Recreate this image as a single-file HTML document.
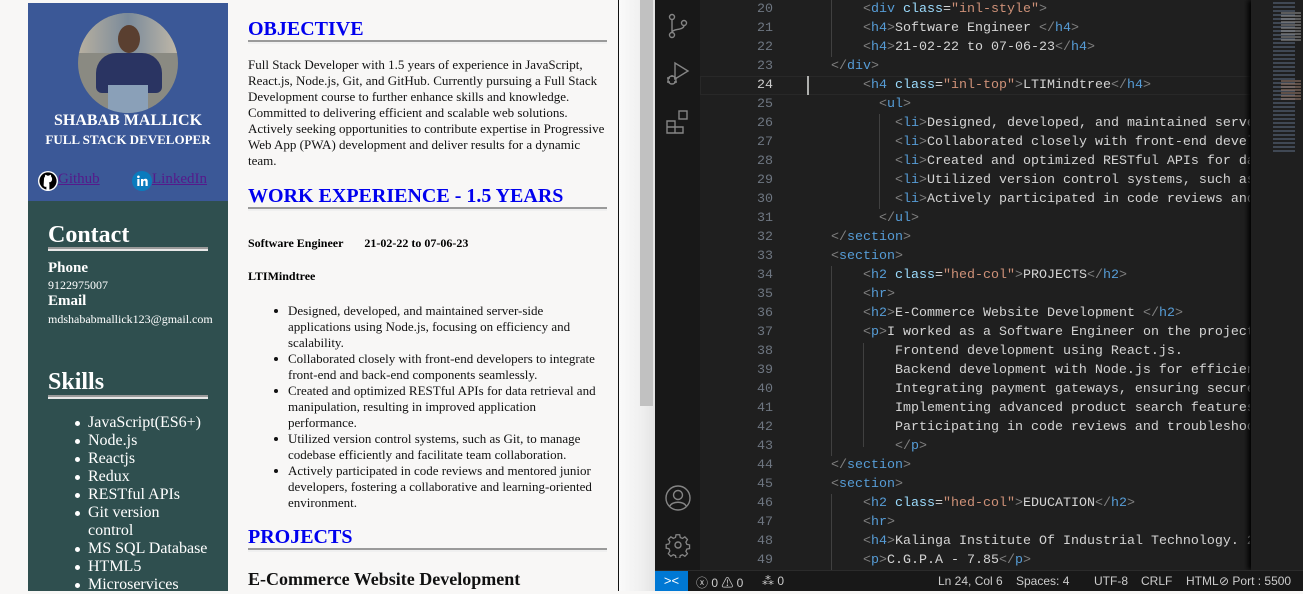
<!DOCTYPE html>
<html><head><meta charset="utf-8"><style>
*{margin:0;padding:0;box-sizing:border-box}
body{width:1303px;height:591px;overflow:hidden;background:#f8f7f6;position:relative;font-family:"Liberation Serif",serif}
.a{position:absolute;white-space:nowrap}
#side1{position:absolute;left:28px;top:3px;width:200px;height:198px;background:#3b5897}
#side2{position:absolute;left:28px;top:201px;width:200px;height:390px;background:#2f4f4f}
.w{color:#fff}
.hrl{position:absolute;height:4px;border-top:2px solid #9a9a9a;border-bottom:2px solid #e8e8e8;background:#c8c8c8}
.hrw{position:absolute;height:4px;border-top:2px solid #9a9a9a;border-bottom:2px solid #f0f0f0;background:#ddd}
h2.b{position:absolute;color:#0000ee;font-size:20px;font-weight:bold;white-space:nowrap;left:248px}
.p{position:absolute;left:248px;width:362px;font-size:13px;line-height:16px;color:#111}
ul.l{position:absolute;left:274px;width:334px;font-size:13px;line-height:16px;list-style:none;color:#111}
ul.l li{position:relative;padding-left:14px}
ul.l li:before{content:"";position:absolute;left:0;top:6px;width:4px;height:4px;border-radius:50%;background:#111}
ul.s{position:absolute;left:70px;top:414px;width:138px;font-size:16px;line-height:18px;list-style:none;color:#fff}
ul.s li{position:relative;padding-left:18px}
ul.s li:before{content:"";position:absolute;left:5px;top:7px;width:5px;height:5px;border-radius:50%;background:#fff}
#sb{position:absolute;left:618px;top:0;width:1px;height:591px;background:#111}
#sbt{position:absolute;left:619px;top:0;width:36px;height:591px;background:linear-gradient(90deg,#fafafa,#f0f0f0 60%,#e4e4e4)}
#th{position:absolute;left:640px;top:0;width:13px;height:406px;background:#c1c1c1}
#act{position:absolute;left:655px;top:0;width:45px;height:570px;background:#181818}
#ed{position:absolute;left:700px;top:0;width:603px;height:570px;background:#1f1f1f}
#status{position:absolute;left:655px;top:570px;width:648px;height:21px;background:#181818;border-top:1px solid #2b2b2b;color:#ccc;font-family:"Liberation Sans",sans-serif;font-size:12px}
#code{position:absolute;left:799px;top:0;width:451px;height:570px;overflow:hidden;font-family:"Liberation Mono",monospace;font-size:13.33px;line-height:19px;color:#d4d4d4;white-space:pre}
#nums{position:absolute;left:700px;top:0;width:73px;text-align:right;font-family:"Liberation Mono",monospace;font-size:13.33px;line-height:19px;color:#6e7681;white-space:pre}
.t{color:#808080}.n{color:#569cd6}.at{color:#9cdcfe}.st{color:#ce9178}
#mini{position:absolute;left:1251px;top:0;width:52px;height:570px;background:#1f1f1f;box-shadow:-3px 0 5px #000}
</style></head><body>
<div id="side1"></div><div id="side2"></div>
<div class="a" style="left:78px;top:13px;width:100px;height:100px;border-radius:50%;overflow:hidden;background:#8a8a82">
<div class="a" style="left:0;top:0;width:100px;height:40px;background:linear-gradient(90deg,#b8b0a0,#7a8a9a,#c0b8a8)"></div>
<div class="a" style="left:18px;top:40px;width:66px;height:40px;border-radius:20px 20px 6px 6px;background:#2a3462"></div>
<div class="a" style="left:40px;top:12px;width:22px;height:28px;border-radius:50%;background:#5a3f30"></div>
<div class="a" style="left:30px;top:72px;width:40px;height:30px;background:#8aa0b8"></div>
</div>
<div class="a w" style="left:28px;width:200px;text-align:center;top:112px;font-size:16px;font-weight:bold">SHABAB MALLICK</div>
<div class="a w" style="left:28px;width:200px;text-align:center;top:132px;font-size:13px;font-weight:bold">FULL STACK DEVELOPER</div>
<svg class="a" style="left:38px;top:171px" width="20" height="20" viewBox="0 0 20 20"><circle cx="10" cy="10" r="10" fill="#fff"/><circle cx="10" cy="10" r="8.6" fill="#000"/><path d="M6 8c0-1 .4-2 1-2.5 0-.8.1-1.5.3-1.8 1 .2 1.6.6 2 1 .5-.1 1-.1 1.5 0 .5-.4 1.2-.8 2-1 .2.3.3 1 .3 1.8.6.5 1 1.5 1 2.5 0 2.5-1.6 3.3-3.3 3.5.4.4.6 1 .6 1.7V19h-3v-3.2c-1.5.3-2.3-.3-2.8-1.3" fill="#fff"/></svg>
<div class="a" style="left:58px;top:171px;font-size:15px;color:#551a8b;text-decoration:underline">Github</div>
<svg class="a" style="left:132px;top:171px" width="20" height="20" viewBox="0 0 20 20"><circle cx="10" cy="10" r="10" fill="#0a7bbd"/><rect x="5.3" y="8" width="2.2" height="7" fill="#fff"/><circle cx="6.4" cy="5.8" r="1.3" fill="#fff"/><path d="M9 8h2.1v1c.5-.8 1.3-1.2 2.3-1.2 1.7 0 2.3 1 2.3 2.8V15h-2.2v-4c0-.9-.3-1.4-1-1.4-.8 0-1.3.5-1.3 1.5V15H9z" fill="#fff"/></svg>
<div class="a" style="left:152px;top:171px;font-size:15px;color:#551a8b;text-decoration:underline">LinkedIn</div>
<div class="a w" style="left:48px;top:222px;font-size:24px;font-weight:bold">Contact</div>
<div class="hrl" style="left:48px;top:247px;width:160px"></div>
<div class="a w" style="left:48px;top:260px;font-size:15px;font-weight:bold">Phone</div>
<div class="a w" style="left:48px;top:278px;font-size:12px">9122975007</div>
<div class="a w" style="left:48px;top:293px;font-size:15px;font-weight:bold">Email</div>
<div class="a w" style="left:48px;top:312px;font-size:12px">mdshababmallick123@gmail.com</div>
<div class="a w" style="left:48px;top:369px;font-size:24px;font-weight:bold">Skills</div>
<div class="hrl" style="left:48px;top:395px;width:160px"></div>
<ul class="s"><li>JavaScript(ES6+)</li><li>Node.js</li><li>Reactjs</li><li>Redux</li><li>RESTful APIs</li><li>Git version control</li><li>MS SQL Database</li><li>HTML5</li><li>Microservices</li></ul>

<h2 class="b" style="top:18px">OBJECTIVE</h2>
<div class="hrw" style="left:248px;top:40px;width:359px"></div>
<div class="p" style="top:57px">Full Stack Developer with 1.5 years of experience in JavaScript, React.js, Node.js, Git, and GitHub. Currently pursuing a Full Stack Development course to further enhance skills and knowledge. Committed to delivering efficient and scalable web solutions. Actively seeking opportunities to contribute expertise in Progressive Web App (PWA) development and deliver results for a dynamic team.</div>
<h2 class="b" style="top:185px">WORK EXPERIENCE - 1.5 YEARS</h2>
<div class="hrw" style="left:248px;top:207px;width:359px"></div>
<div class="a" style="left:248px;top:236px;font-size:12px;font-weight:bold">Software Engineer&nbsp;&nbsp;&nbsp;&nbsp;&nbsp;&nbsp; 21-02-22 to 07-06-23</div>
<div class="a" style="left:248px;top:269px;font-size:12px;font-weight:bold">LTIMindtree</div>
<ul class="l" style="top:303px"><li>Designed, developed, and maintained server-side applications using Node.js, focusing on efficiency and scalability.</li><li>Collaborated closely with front-end developers to integrate front-end and back-end components seamlessly.</li><li>Created and optimized RESTful APIs for data retrieval and manipulation, resulting in improved application performance.</li><li>Utilized version control systems, such as Git, to manage codebase efficiently and facilitate team collaboration.</li><li>Actively participated in code reviews and mentored junior developers, fostering a collaborative and learning-oriented environment.</li></ul>
<h2 class="b" style="top:526px">PROJECTS</h2>
<div class="hrw" style="left:248px;top:548px;width:359px"></div>
<div class="a" style="left:248px;top:569px;font-size:18px;font-weight:bold;color:#111">E-Commerce Website Development</div>

<div id="sbt"></div><div id="sb"></div><div id="th"></div>
<div id="act"></div>
<svg class="a" style="left:666px;top:13px" width="24" height="26" viewBox="0 0 24 26" fill="none" stroke="#858585" stroke-width="1.4"><circle cx="6" cy="4" r="2.5"/><circle cx="6" cy="22" r="2.5"/><circle cx="18" cy="10" r="2.5"/><path d="M6 6.5v13M18 12.5c0 5-12 3-12 7"/></svg>
<svg class="a" style="left:665px;top:61px" width="26" height="26" viewBox="0 0 26 26" fill="none" stroke="#858585" stroke-width="1.4"><path d="M10 2v16l13-8z"/><circle cx="7" cy="19" r="4"/><path d="M2 17h3M2 21h3M9 17h3M9 21h3M7 14v2"/></svg>
<svg class="a" style="left:665px;top:109px" width="26" height="26" viewBox="0 0 26 26" fill="none" stroke="#858585" stroke-width="1.4"><path d="M2 12h8v12H2zM2 18h16v6h-8M10 12v6"/><rect x="14" y="2" width="8" height="8"/></svg>
<svg class="a" style="left:665px;top:485px" width="26" height="26" viewBox="0 0 26 26" fill="none" stroke="#858585" stroke-width="1.4"><circle cx="13" cy="13" r="12"/><circle cx="13" cy="10" r="4.5"/><path d="M5 21c2-5 14-5 16 0"/></svg>
<svg class="a" style="left:665px;top:532px" width="26" height="26" viewBox="0 0 26 26" fill="none" stroke="#858585" stroke-width="1.4"><circle cx="13" cy="13" r="3"/><path d="M11 2h4l.6 3 2.4 1 2.6-1.7 2.8 2.8L21.7 10l1 2.4 3 .6v4l-3 .6-1 2.4 1.7 2.6-2.8 2.8-2.6-1.7-2.4 1-.6 3h-4l-.6-3-2.4-1-2.6 1.7-2.8-2.8L4.3 19.6l-1-2.4-3-.6v-4l3-.6 1-2.4L2.6 7l2.8-2.8L8 5.9l2.4-1z" transform="scale(.92) translate(1 1)"/></svg>
<div id="ed"></div>
<div class="a" style="left:700px;top:76px;width:551px;height:19px;border:1px solid #282828"></div>
<div class="a" style="left:807px;top:76px;width:2px;height:19px;background:#aeafad"></div>
<div class="a" style="left:831px;top:0;width:1px;height:57px;background:#404040"></div>
<div class="a" style="left:831px;top:266px;width:1px;height:190px;background:#404040"></div>
<div class="a" style="left:831px;top:494px;width:1px;height:76px;background:#404040"></div>
<div class="a" style="left:863px;top:343px;width:1px;height:104px;background:#404040"></div>
<div class="a" style="left:879px;top:114px;width:1px;height:95px;background:#404040"></div>
<div id="nums">20
21
22
23
<span style="color:#ccc">24</span>
25
26
27
28
29
30
31
32
33
34
35
36
37
38
39
40
41
42
43
44
45
46
47
48
49</div>
<div id="code">        <span class="t">&lt;</span><span class="n">div</span> <span class="at">class</span>=<span class="st">"inl-style"</span><span class="t">&gt;</span>
        <span class="t">&lt;</span><span class="n">h4</span><span class="t">&gt;</span>Software Engineer <span class="t">&lt;/</span><span class="n">h4</span><span class="t">&gt;</span>
        <span class="t">&lt;</span><span class="n">h4</span><span class="t">&gt;</span>21-02-22 to 07-06-23<span class="t">&lt;/</span><span class="n">h4</span><span class="t">&gt;</span>
    <span class="t">&lt;/</span><span class="n">div</span><span class="t">&gt;</span>
        <span class="t">&lt;</span><span class="n">h4</span> <span class="at">class</span>=<span class="st">"inl-top"</span><span class="t">&gt;</span>LTIMindtree<span class="t">&lt;/</span><span class="n">h4</span><span class="t">&gt;</span>
          <span class="t">&lt;</span><span class="n">ul</span><span class="t">&gt;</span>
            <span class="t">&lt;</span><span class="n">li</span><span class="t">&gt;</span>Designed, developed, and maintained server-side
            <span class="t">&lt;</span><span class="n">li</span><span class="t">&gt;</span>Collaborated closely with front-end developers
            <span class="t">&lt;</span><span class="n">li</span><span class="t">&gt;</span>Created and optimized RESTful APIs for data retrieval
            <span class="t">&lt;</span><span class="n">li</span><span class="t">&gt;</span>Utilized version control systems, such as Git
            <span class="t">&lt;</span><span class="n">li</span><span class="t">&gt;</span>Actively participated in code reviews and mentored
          <span class="t">&lt;/</span><span class="n">ul</span><span class="t">&gt;</span>
    <span class="t">&lt;/</span><span class="n">section</span><span class="t">&gt;</span>
    <span class="t">&lt;</span><span class="n">section</span><span class="t">&gt;</span>
        <span class="t">&lt;</span><span class="n">h2</span> <span class="at">class</span>=<span class="st">"hed-col"</span><span class="t">&gt;</span>PROJECTS<span class="t">&lt;/</span><span class="n">h2</span><span class="t">&gt;</span>
        <span class="t">&lt;</span><span class="n">hr</span><span class="t">&gt;</span>
        <span class="t">&lt;</span><span class="n">h2</span><span class="t">&gt;</span>E-Commerce Website Development <span class="t">&lt;/</span><span class="n">h2</span><span class="t">&gt;</span>
        <span class="t">&lt;</span><span class="n">p</span><span class="t">&gt;</span>I worked as a Software Engineer on the project, focusing on
            Frontend development using React.js.
            Backend development with Node.js for efficiency
            Integrating payment gateways, ensuring secure transactions
            Implementing advanced product search features.
            Participating in code reviews and troubleshooting
            <span class="t">&lt;/</span><span class="n">p</span><span class="t">&gt;</span>
    <span class="t">&lt;/</span><span class="n">section</span><span class="t">&gt;</span>
    <span class="t">&lt;</span><span class="n">section</span><span class="t">&gt;</span>
        <span class="t">&lt;</span><span class="n">h2</span> <span class="at">class</span>=<span class="st">"hed-col"</span><span class="t">&gt;</span>EDUCATION<span class="t">&lt;/</span><span class="n">h2</span><span class="t">&gt;</span>
        <span class="t">&lt;</span><span class="n">hr</span><span class="t">&gt;</span>
        <span class="t">&lt;</span><span class="n">h4</span><span class="t">&gt;</span>Kalinga Institute Of Industrial Technology. 2019
        <span class="t">&lt;</span><span class="n">p</span><span class="t">&gt;</span>C.G.P.A - 7.85<span class="t">&lt;/</span><span class="n">p</span><span class="t">&gt;</span></div>
<div id="mini">
<div class="a" style="left:22px;top:2px;width:22px;height:150px;background:repeating-linear-gradient(180deg,#5a6a80 0 2px,transparent 2px 4px);opacity:.55"></div>
<div class="a" style="left:30px;top:12px;width:20px;height:30px;background:repeating-linear-gradient(180deg,#999 0 2px,transparent 2px 3px);opacity:.5"></div>
<div class="a" style="left:30px;top:80px;width:20px;height:20px;background:repeating-linear-gradient(180deg,#a08070 0 2px,transparent 2px 3px);opacity:.5"></div>
</div>
<div id="status">
<div class="a" style="left:0;top:0;width:33px;height:20px;background:#0078d4;color:#fff;text-align:center;font-size:13px;line-height:19px">&gt;&lt;</div>
<div class="a" style="left:41px;top:3px">ⓧ 0 ⚠ 0</div>
<div class="a" style="left:107px;top:3px">⁂ 0</div>
<div class="a" style="left:283px;top:3px">Ln 24, Col 6</div>
<div class="a" style="left:361px;top:3px">Spaces: 4</div>
<div class="a" style="left:439px;top:3px">UTF-8</div>
<div class="a" style="left:486px;top:3px">CRLF</div>
<div class="a" style="left:531px;top:3px">HTML</div>
<div class="a" style="left:564px;top:3px">⊘ Port : 5500</div>
</div>
</body></html>
